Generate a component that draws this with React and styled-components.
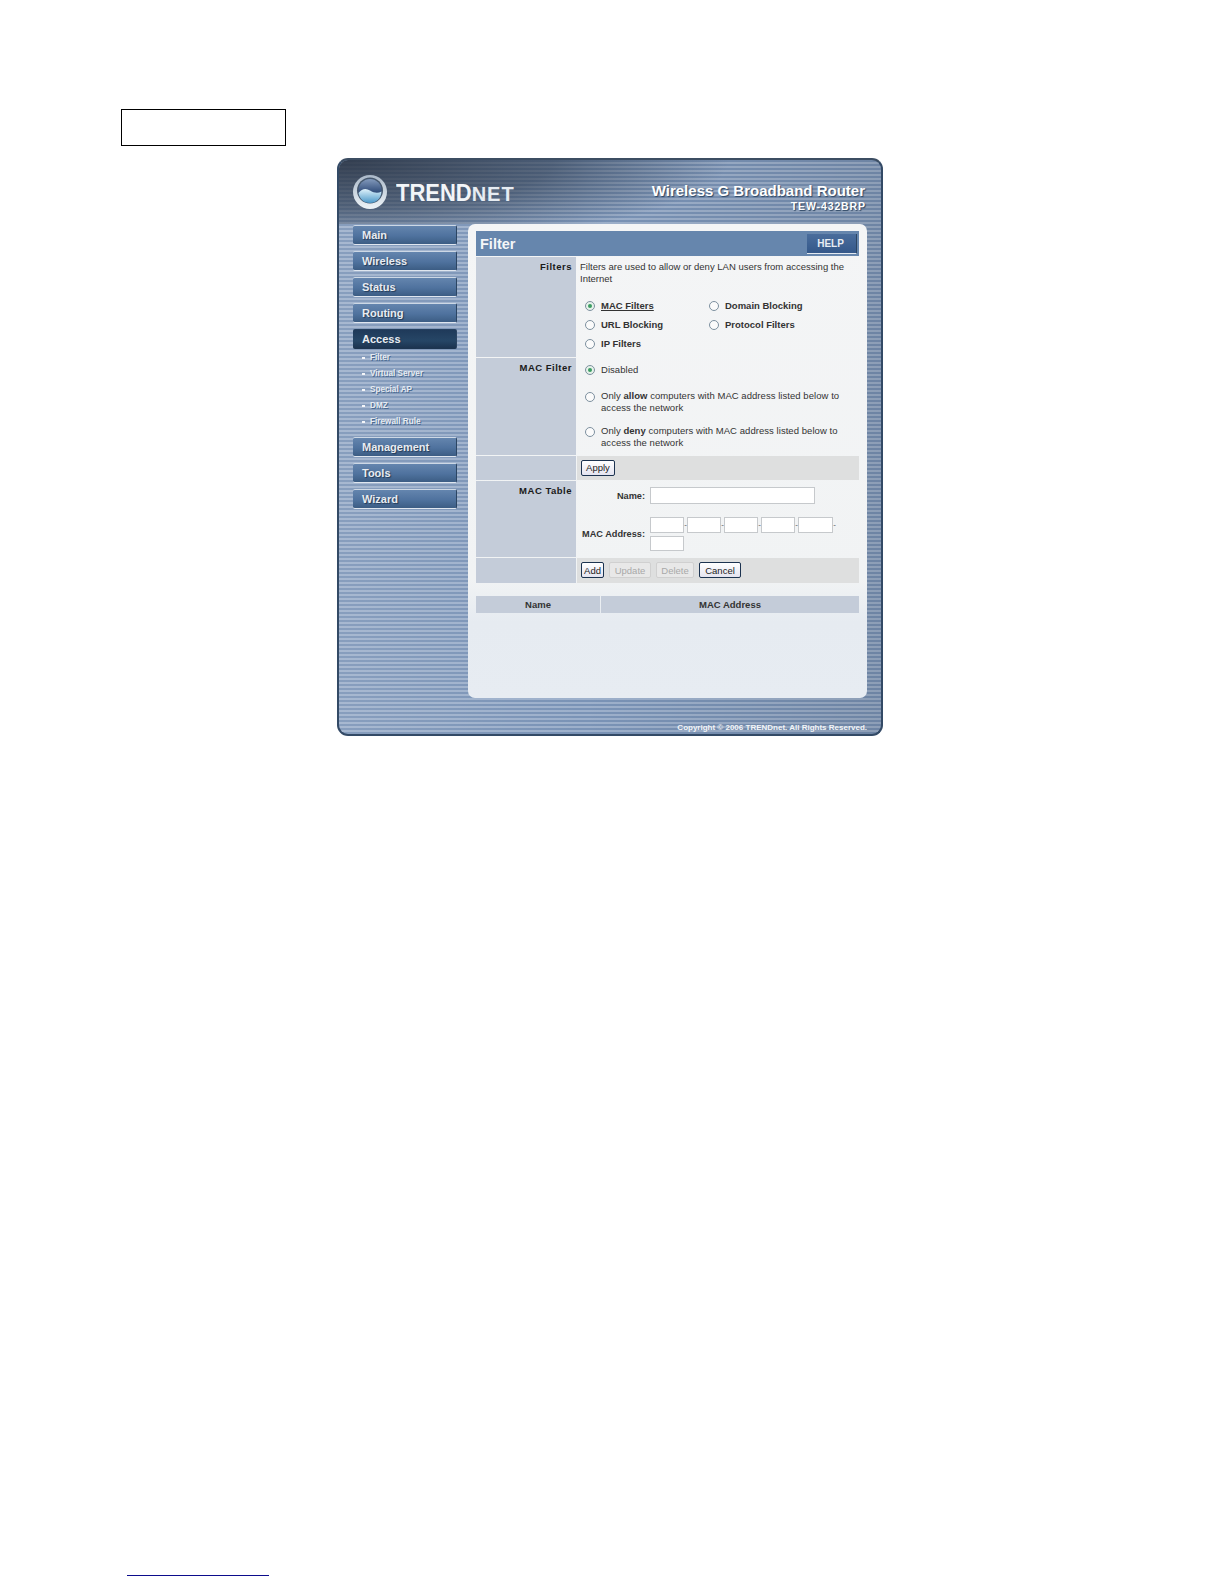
import React from 'react';
import styled, { createGlobalStyle } from 'styled-components';

const GlobalStyle = createGlobalStyle`
    html, body {
        margin: 0;
        padding: 0;
        background: #fff;
    }
    body {
        font-family: "Liberation Sans", Arial, sans-serif;
    }
`;

const Page = styled.div`
    width: 1224px;
    height: 1584px;
    padding-top: 109px;
    box-sizing: border-box;
    display: flex;
    flex-direction: column;
`;

const EmptyBox = styled.div`
    width: 165px;
    height: 37px;
    margin-left: 121px;
    box-sizing: border-box;
    border: 1px solid #000;
`;

const Frame = styled.div`
    width: 546px;
    height: 578px;
    margin: 12px 0 0 337px;
    box-sizing: border-box;
    border: 2px solid #334a66;
    border-top-color: #3c4d62;
    border-radius: 11px;
    overflow: hidden;
    display: flex;
    flex-direction: column;
    background:
        linear-gradient(90deg, rgba(255, 255, 255, 0.1) 0%, rgba(255, 255, 255, 0) 45%, rgba(0, 0, 0, 0.1) 100%),
        repeating-linear-gradient(180deg, #7a93b6 0 2px, #9db0cb 2px 4px);
`;

const Header = styled.div`
    height: 64px;
    flex: none;
    box-sizing: border-box;
    padding: 15px 16px 0 14px;
    display: flex;
    justify-content: space-between;
    background: radial-gradient(ellipse 72% 135% at 0% 0%, rgba(38, 48, 64, 0.88) 0%, rgba(44, 58, 78, 0.62) 55%, rgba(60, 80, 110, 0) 100%);
`;

const Logo = styled.div`
    display: flex;
    align-items: center;
    height: 34px;
    gap: 9px;
`;

const LogoText = styled.div`
    font-weight: 700;
    font-size: 23px;
    line-height: 34px;
    padding-top: 3px;
    color: #f2f5f8;
    white-space: nowrap;
    transform: scaleX(0.955);
    transform-origin: left center;
    span {
        font-size: 21px;
        letter-spacing: 1px;
        color: #e6ecf2;
    }
`;

const Product = styled.div`
    text-align: right;
    color: #fff;
    font-weight: 700;
    padding-top: 8px;
    text-shadow: 1px 1px 1px #2c4562;
`;

const ProductName = styled.div`
    font-size: 15px;
    line-height: 16px;
`;

const ProductModel = styled.div`
    font-size: 10.5px;
    line-height: 12px;
    letter-spacing: 0.9px;
    margin-top: 1px;
    margin-right: -1px;
`;

const Body = styled.div`
    display: flex;
    flex: 1;
    min-height: 0;
`;

const Sidebar = styled.nav`
    width: 129px;
    flex: none;
    box-sizing: border-box;
    padding: 1px 0 0 14px;
    display: flex;
    flex-direction: column;
`;

const NavButton = styled.div`
    width: 104px;
    height: 20px;
    margin-bottom: ${props => (props.$active ? '1px' : '6px')};
    box-sizing: border-box;
    padding-left: 9px;
    display: flex;
    align-items: center;
    font-size: 11px;
    font-weight: 700;
    color: #e8ecf1;
    text-shadow: 1px 1px 1px #233a56;
    border-radius: 2px;
    border-bottom: 1px solid ${props => (props.$active ? '#1d3550' : '#dfe6ef')};
    border-top: 1px solid ${props => (props.$active ? '#25405f' : '#cdd8e5')};
    border-right: 1px solid #2c4562;
    background: ${props => props.$active
        ? 'linear-gradient(180deg, #1f3a5a 0%, #264666 60%, #1c3450 100%)'
        : 'linear-gradient(180deg, #6485ae 0%, #4f729e 55%, #3c5d84 100%)'};
`;

const SubMenu = styled.div`
    display: flex;
    flex-direction: column;
    padding: 0 0 7px 9px;
`;

const SubItem = styled.div`
    height: 16px;
    line-height: 16px;
    font-size: 8.2px;
    font-weight: 700;
    color: #e6ebf2;
    text-shadow: 1px 1px 0 #4b6a90;
    &::before {
        content: '';
        display: inline-block;
        width: 3px;
        height: 2px;
        margin-right: 5px;
        vertical-align: middle;
        background: #f4f6f9;
    }
`;

const MainArea = styled.div`
    flex: 1;
    box-sizing: border-box;
    padding: 0 14px 0 0;
    display: flex;
    flex-direction: column;
`;

const Panel = styled.div`
    height: 474px;
    flex: none;
    box-sizing: border-box;
    padding: 7px 8px 0 8px;
    border-radius: 7px;
    background: linear-gradient(180deg, #f4f5f6 0%, #f1f3f4 75%, #e6ebf1 84%, #e7ecf2 100%);
    display: flex;
    flex-direction: column;
`;

const TitleBar = styled.div`
    height: 25px;
    flex: none;
    display: flex;
    align-items: center;
    justify-content: space-between;
    padding: 0 2px 0 4px;
    background: #6686ad;
    margin-bottom: 1px;
`;

const Title = styled.div`
    font-size: 14.5px;
    font-weight: 700;
    color: #f4f6f8;
`;

const HelpButton = styled.div`
    width: 50px;
    height: 20px;
    box-sizing: border-box;
    padding-right: 2px;
    display: flex;
    align-items: center;
    justify-content: center;
    font-size: 10px;
    font-weight: 700;
    color: #e8edf3;
    border-bottom: 1px solid #e3e9f0;
    border-right: 1px solid #2c4562;
    background: linear-gradient(180deg, #4a6d9c 0%, #34588a 100%);
`;

const Row = styled.div`
    display: flex;
    height: ${props => props.$h}px;
    flex: none;
    margin-bottom: 1px;
`;

const RowLabel = styled.div`
    width: 100px;
    flex: none;
    box-sizing: border-box;
    padding: 4px 4px 0 0;
    text-align: right;
    font-size: 9.5px;
    font-weight: 700;
    line-height: 12px;
    color: #1a1a1a;
    letter-spacing: 0.5px;
    background: #c4ccd9;
`;

const RowContent = styled.div`
    flex: 1;
    margin-left: 1px;
    box-sizing: border-box;
    background: ${props => (props.$action ? '#dedfdf' : 'transparent')};
    display: flex;
    flex-direction: column;
    ${props => props.$action && 'flex-direction: row; align-items: center; gap: 5px; padding: 0 0 1px 4px;'}
`;

const Intro = styled.div`
    font-size: 9.5px;
    line-height: 12px;
    color: #333;
    padding: 4px 0 0 3px;
    margin-bottom: 11px;
`;

const RadioGrid = styled.div`
    display: grid;
    grid-template-columns: 124px 1fr;
    grid-auto-rows: 19px;
    padding-left: 8px;
`;

const RadioOption = styled.div`
    display: flex;
    align-items: ${props => (props.$multi ? 'flex-start' : 'center')};
    gap: 6px;
    margin-top: ${props => props.$mt || 0}px;
    font-size: 9.5px;
    line-height: 12px;
    font-weight: ${props => (props.$bold ? 700 : 400)};
    letter-spacing: ${props => (props.$bold ? '0' : '0.05px')};
    color: #333;
    b {
        font-weight: 700;
    }
`;

const RadioCircle = styled.span`
    width: 10px;
    height: 10px;
    flex: none;
    box-sizing: border-box;
    border-radius: 50%;
    border: 1px solid #7d909f;
    background: ${props => (props.$checked ? '#e6f2ea' : '#fbfbfb')};
    display: flex;
    align-items: center;
    justify-content: center;
    margin-top: ${props => (props.$multi ? '2px' : '0')};
    &::after {
        content: '';
        display: ${props => (props.$checked ? 'block' : 'none')};
        width: 4px;
        height: 4px;
        border-radius: 50%;
        background: #3c9c62;
    }
`;

const Underlined = styled.span`
    text-decoration: underline;
`;

const RadioStack = styled.div`
    display: flex;
    flex-direction: column;
    padding: 6px 0 0 8px;
`;

const FormButton = styled.div`
    height: 16px;
    width: ${props => props.$w}px;
    box-sizing: border-box;
    display: flex;
    align-items: center;
    justify-content: center;
    font-size: 9.5px;
    border-radius: 2px;
    color: ${props => (props.$disabled ? '#a8a8a8' : '#222')};
    border: 1px solid ${props => (props.$disabled ? '#d0d0d0' : '#1c3350')};
    background: ${props => (props.$disabled
        ? '#e8e8e8'
        : 'linear-gradient(180deg, #ffffff 0%, #e4e4f0 100%)')};
`;

const FieldRow = styled.div`
    display: flex;
    align-items: center;
    margin-top: ${props => props.$mt}px;
    gap: 5px;
`;

const FieldLabel = styled.div`
    width: 68px;
    flex: none;
    text-align: right;
    font-size: 9.2px;
    font-weight: 700;
    white-space: nowrap;
    color: #333;
`;

const TextBox = styled.div`
    width: ${props => props.$w}px;
    height: ${props => props.$h}px;
    flex: none;
    box-sizing: border-box;
    background: #fff;
    border: 1px solid #c6c9cc;
`;

const MacInputs = styled.div`
    display: flex;
    flex-wrap: wrap;
    width: 190px;
    row-gap: 3px;
    align-items: center;
`;

const Dash = styled.span`
    width: 3px;
    text-align: center;
    font-size: 8px;
    line-height: 16px;
    color: #555;
`;

const TableHead = styled.div`
    display: flex;
    gap: 1px;
    height: 17px;
    flex: none;
    margin-top: 12px;
`;

const HeadCell = styled.div`
    width: ${props => props.$w ? `${props.$w}px` : 'auto'};
    flex: ${props => (props.$w ? 'none' : 1)};
    display: flex;
    align-items: center;
    justify-content: center;
    font-size: 9.5px;
    font-weight: 700;
    color: #333;
    background: #c4ccd9;
`;

const Footer = styled.div`
    flex: 1;
    display: flex;
    align-items: flex-end;
    justify-content: flex-end;
    padding: 0 0 2px 0;
    font-size: 8px;
    font-weight: 700;
    color: #f2f5f8;
`;

const FootLine = styled.div`
    width: 142px;
    height: 1px;
    margin: auto 0 8px 127px;
    background: #0c0c8c;
`;

function TrendLogo() {
    return (
        <svg width="34" height="34" viewBox="0 0 34 34">
            <defs>
                <linearGradient id="logoRing" x1="0" y1="0" x2="0" y2="1">
                    <stop offset="0" stopColor="#aab8c8" />
                    <stop offset="1" stopColor="#eef4f8" />
                </linearGradient>
                <linearGradient id="logoTop" x1="0" y1="0" x2="0" y2="1">
                    <stop offset="0" stopColor="#8299bb" />
                    <stop offset="0.6" stopColor="#2e4a78" />
                </linearGradient>
                <linearGradient id="logoBottom" x1="0" y1="0" x2="0" y2="1">
                    <stop offset="0" stopColor="#dff2fb" />
                    <stop offset="1" stopColor="#4b97c8" />
                </linearGradient>
            </defs>
            <circle cx="17" cy="17" r="17" fill="url(#logoRing)" />
            <circle cx="17" cy="15.5" r="13" fill="#46586e" />
            <circle cx="17" cy="15.5" r="11.5" fill="url(#logoTop)" />
            <path d="M5.5 18 C9 13.5 13 13 17 15.5 C21 18 25 18.5 28.5 16.5 C28 24 23 28 17 28 C11 28 6.5 24 5.5 18 Z" fill="url(#logoBottom)" />
        </svg>
    );
}

function Radio({ label, checked, bold, multi, mt, children }) {
    return (
        <RadioOption $bold={bold} $multi={multi} $mt={mt}>
            <RadioCircle $checked={checked} $multi={multi} />
            <span>{children || label}</span>
        </RadioOption>
    );
}

function App() {
    return (
        <>
            <GlobalStyle />
            <Page>
                <EmptyBox />
                <Frame>
                    <Header>
                        <Logo>
                            <TrendLogo />
                            <LogoText>TREND<span>NET</span></LogoText>
                        </Logo>
                        <Product>
                            <ProductName>Wireless G Broadband Router</ProductName>
                            <ProductModel>TEW-432BRP</ProductModel>
                        </Product>
                    </Header>
                    <Body>
                        <Sidebar>
                            <NavButton>Main</NavButton>
                            <NavButton>Wireless</NavButton>
                            <NavButton>Status</NavButton>
                            <NavButton>Routing</NavButton>
                            <NavButton $active>Access</NavButton>
                            <SubMenu>
                                <SubItem>Filter</SubItem>
                                <SubItem>Virtual Server</SubItem>
                                <SubItem>Special AP</SubItem>
                                <SubItem>DMZ</SubItem>
                                <SubItem>Firewall Rule</SubItem>
                            </SubMenu>
                            <NavButton>Management</NavButton>
                            <NavButton>Tools</NavButton>
                            <NavButton>Wizard</NavButton>
                        </Sidebar>
                        <MainArea>
                            <Panel>
                                <TitleBar>
                                    <Title>Filter</Title>
                                    <HelpButton>HELP</HelpButton>
                                </TitleBar>
                                <Row $h={100}>
                                    <RowLabel>Filters</RowLabel>
                                    <RowContent>
                                        <Intro>Filters are used to allow or deny LAN users from accessing the Internet</Intro>
                                        <RadioGrid>
                                            <Radio bold checked><Underlined>MAC Filters</Underlined></Radio>
                                            <Radio bold label="Domain Blocking" />
                                            <Radio bold label="URL Blocking" />
                                            <Radio bold label="Protocol Filters" />
                                            <Radio bold label="IP Filters" />
                                        </RadioGrid>
                                    </RowContent>
                                </Row>
                                <Row $h={97}>
                                    <RowLabel>MAC Filter</RowLabel>
                                    <RowContent>
                                        <RadioStack>
                                            <Radio checked label="Disabled" />
                                            <Radio multi mt={14}>Only <b>allow</b> computers with MAC address listed below to<br />access the network</Radio>
                                            <Radio multi mt={11}>Only <b>deny</b> computers with MAC address listed below to<br />access the network</Radio>
                                        </RadioStack>
                                    </RowContent>
                                </Row>
                                <Row $h={24}>
                                    <RowLabel />
                                    <RowContent $action>
                                        <FormButton $w={34}>Apply</FormButton>
                                    </RowContent>
                                </Row>
                                <Row $h={76}>
                                    <RowLabel>MAC Table</RowLabel>
                                    <RowContent>
                                        <FieldRow $mt={6}>
                                            <FieldLabel>Name:</FieldLabel>
                                            <TextBox $w={165} $h={17} />
                                        </FieldRow>
                                        <FieldRow $mt={13}>
                                            <FieldLabel>MAC Address:</FieldLabel>
                                            <MacInputs>
                                                <TextBox $w={34} $h={16} /><Dash>-</Dash>
                                                <TextBox $w={34} $h={16} /><Dash>-</Dash>
                                                <TextBox $w={34} $h={16} /><Dash>-</Dash>
                                                <TextBox $w={34} $h={16} /><Dash>-</Dash>
                                                <TextBox $w={35} $h={16} /><Dash>-</Dash>
                                                <TextBox $w={34} $h={15} />
                                            </MacInputs>
                                        </FieldRow>
                                    </RowContent>
                                </Row>
                                <Row $h={25}>
                                    <RowLabel />
                                    <RowContent $action>
                                        <FormButton $w={23}>Add</FormButton>
                                        <FormButton $w={42} $disabled>Update</FormButton>
                                        <FormButton $w={38} $disabled>Delete</FormButton>
                                        <FormButton $w={42}>Cancel</FormButton>
                                    </RowContent>
                                </Row>
                                <TableHead>
                                    <HeadCell $w={124}>Name</HeadCell>
                                    <HeadCell>MAC Address</HeadCell>
                                </TableHead>
                            </Panel>
                            <Footer>Copyright © 2006 TRENDnet. All Rights Reserved.</Footer>
                        </MainArea>
                    </Body>
                </Frame>
                <FootLine />
            </Page>
        </>
    );
}

export default App;
